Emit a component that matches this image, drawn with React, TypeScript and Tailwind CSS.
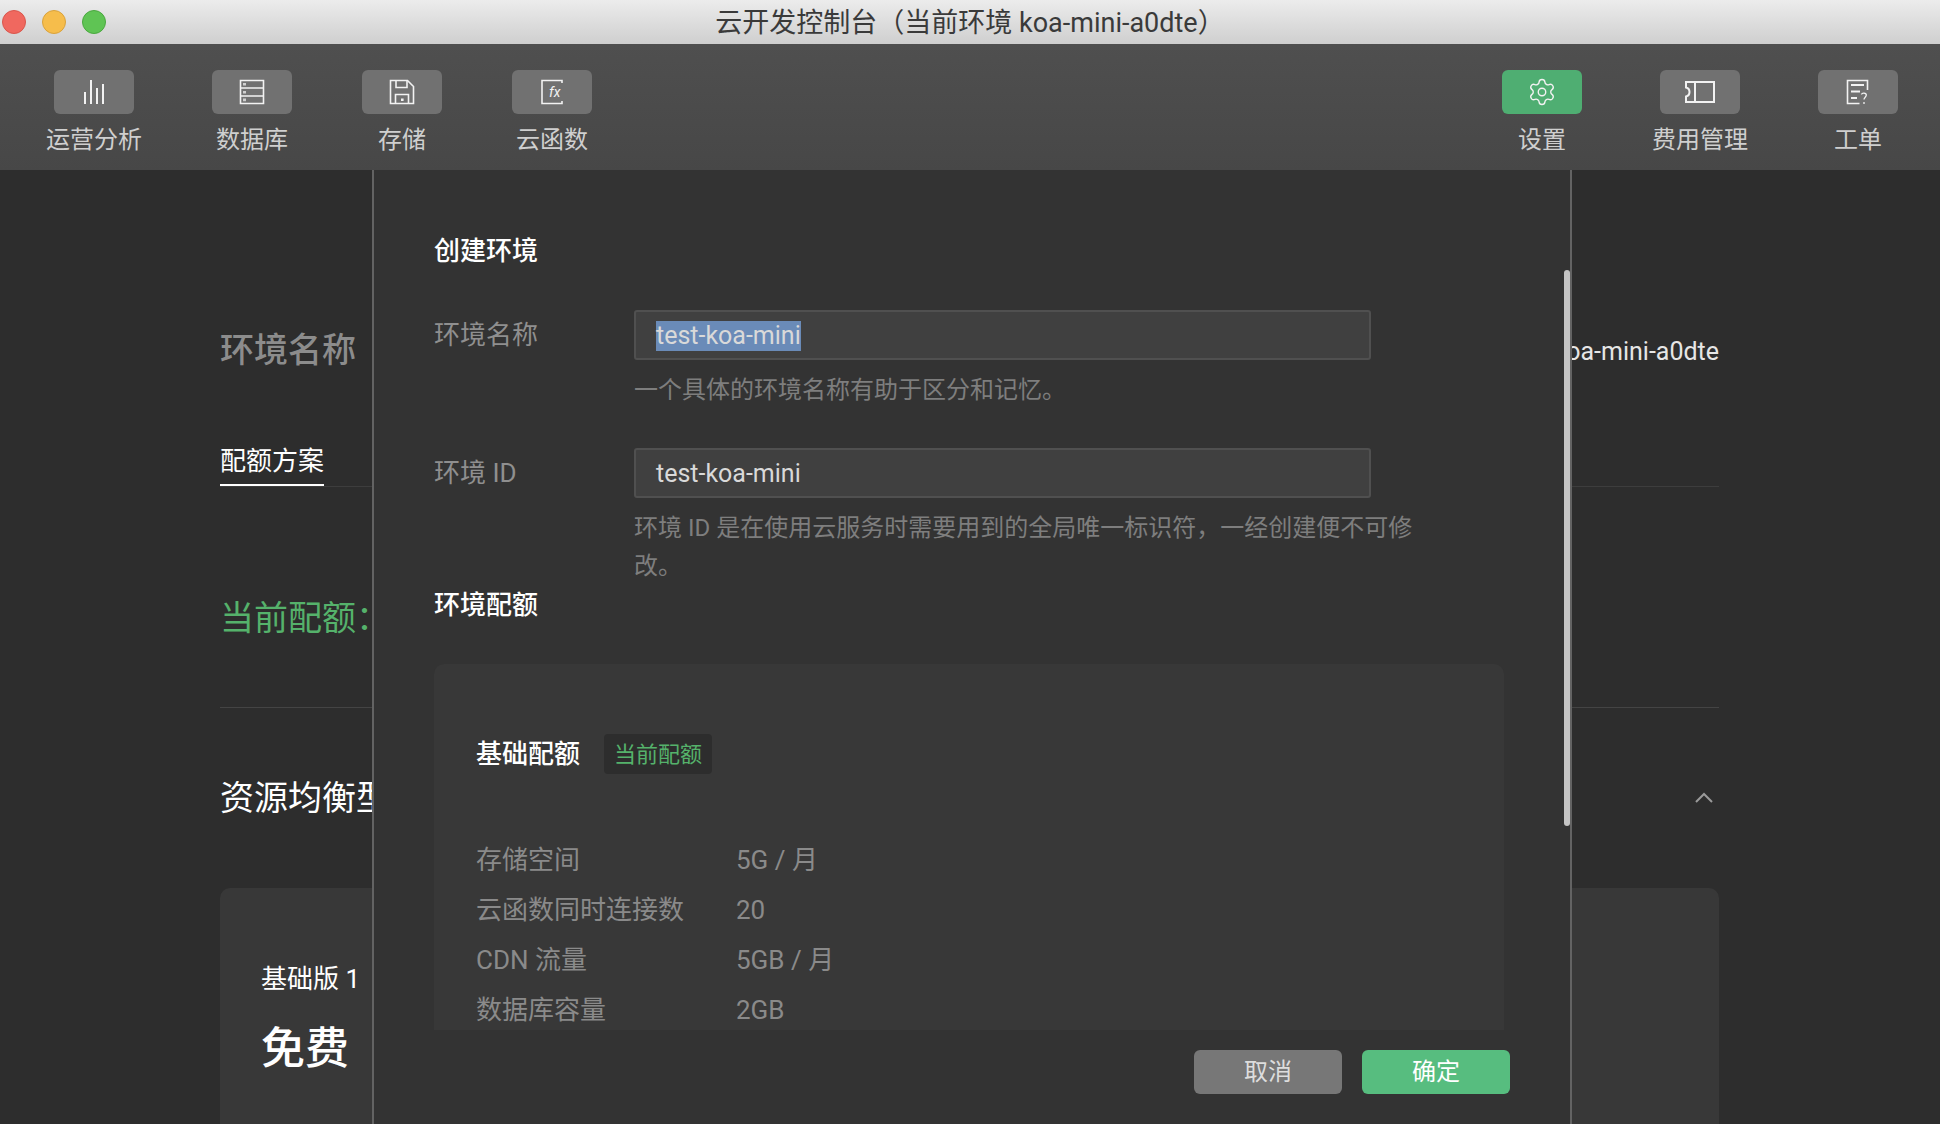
import { Settings } from "lucide-react";

const stroke = { fill: "none", stroke: "#f2f2f2", strokeWidth: 1.6 };

function IconChart() {
  return (
    <svg width="24" height="26" viewBox="0 0 24 26" {...stroke} strokeWidth={2}>
      <path d="M3 13v12M9 1v24M15 9v16M21 5v20" />
    </svg>
  );
}
function IconDb() {
  return (
    <svg width="26" height="26" viewBox="0 0 26 26" {...stroke}>
      <path d="M1.5 1.5h23v23h-23zM1.5 9h23M1.5 17h23" />
      <path d="M4 4h3v2.6H4zM4 12h3v2.6H4zM4 19.6h3v2.6H4z" fill="#cfcfcf" stroke="none" />
    </svg>
  );
}
function IconSave() {
  return (
    <svg width="26" height="26" viewBox="0 0 26 26" {...stroke}>
      <path d="M1.5 1.5h17l6 6v17h-23z" />
      <path d="M7 1.5v7h11v-7M6.5 24.5v-9h13v9" />
      <path d="M12 19.5h2.6V22H12z" fill="#f2f2f2" stroke="none" />
    </svg>
  );
}
function IconFx() {
  return (
    <svg width="24" height="26" viewBox="0 0 24 26" {...stroke}>
      <path d="M22 4V1.5H2v23h20V22" />
      <text x="9" y="18" fill="#f2f2f2" stroke="none" fontSize="14" fontStyle="italic" fontFamily="Roboto, sans-serif">fx</text>
    </svg>
  );
}
function IconTicket() {
  return (
    <svg width="30" height="22" viewBox="0 0 30 22" fill="none" stroke="#f2f2f2" strokeWidth="2">
      <path d="M1 1h28v20H1v-5.500c2.500-.5 3.500-2.500 3.500-4.500S3.500 7 1 6.500zM10 1v20" />
    </svg>
  );
}
function IconTicketQ() {
  return (
    <svg width="24" height="26" viewBox="0 0 24 26" {...stroke}>
      <path d="M21.500 11V1.500h-20v23h12" />
      <path d="M5 6h13M5 12.500h9M5 19h6" strokeWidth="2" />
      <path d="M15.500 15.500c.3-2 4.800-2 4.800.6 0 2-2.300 2.200-2.300 4.400M18 23v2" strokeWidth="1.300" />
    </svg>
  );
}

function ToolItem({ label, icon, active }: { label: string; icon: React.ReactNode; active?: boolean }) {
  return (
    <div className="flex flex-col items-center">
      <div
        className={
          active
            ? "flex h-[44px] w-[80px] items-center justify-center rounded-[6px] bg-[#4fae72]"
            : "flex h-[44px] w-[80px] items-center justify-center rounded-[6px] bg-[#717171]"
        }
      >
        {icon}
      </div>
      <div className="mt-[10px] text-[24px] leading-[32px] text-[#cfcfcf]">{label}</div>
    </div>
  );
}

function QuotaRow({ name, value }: { name: string; value: string }) {
  return (
    <div className="flex h-[50px] items-center text-[26px] text-[#8a8a8a]">
      <div className="w-[260px]">{name}</div>
      <div>{value}</div>
    </div>
  );
}

export default function App() {
  return (
    <div className="relative flex h-screen w-full flex-col overflow-hidden bg-[#2d2d2d] font-['Roboto','Noto_Sans_CJK_SC',sans-serif]">
      <header className="relative flex h-[44px] shrink-0 items-center justify-center bg-gradient-to-b from-[#ececec] to-[#cfcfcf] pt-[2px]">
        <div className="absolute left-[2px] top-[10px] flex gap-[16px]">
          <span className="h-[24px] w-[24px] rounded-full border border-[#d9564c] bg-[#f0685f]" />
          <span className="h-[24px] w-[24px] rounded-full border border-[#d9a23c] bg-[#f6bd4b]" />
          <span className="h-[24px] w-[24px] rounded-full border border-[#4aa83f] bg-[#5fc454]" />
        </div>
        <div className="text-[27px] text-[#3a3a3a]">云开发控制台（当前环境 koa-mini-a0dte）</div>
      </header>

      <nav className="flex h-[126px] shrink-0 items-start justify-between bg-gradient-to-b from-[#4f4f4f] to-[#474747] pl-[46px] pr-[42px] pt-[26px]">
        <div className="flex gap-[70px]">
          <ToolItem label="运营分析" icon={<IconChart />} />
          <ToolItem label="数据库" icon={<IconDb />} />
          <ToolItem label="存储" icon={<IconSave />} />
          <ToolItem label="云函数" icon={<IconFx />} />
        </div>
        <div className="flex gap-[70px]">
          <ToolItem label="设置" icon={<Settings size={30} strokeWidth={1.1} color="#f2f2f2" />} active />
          <ToolItem label="费用管理" icon={<IconTicket />} />
          <ToolItem label="工单" icon={<IconTicketQ />} />
        </div>
      </nav>

      <main className="flex-1 overflow-hidden pl-[220px] pr-[221px]">
        <div className="mt-[150px] flex h-[60px] items-center justify-between">
          <div className="text-[34px] font-medium text-[#8c8c8c]">环境名称</div>
          <div className="pt-[3px] text-[25px] text-[#e6e6e6]">koa-mini-a0dte</div>
        </div>
        <div className="mt-[62px] border-b border-[#3d3d3d]">
          <div className="inline-block border-b-2 border-white pb-[4px] text-[26px] leading-[38px] text-white">配额方案</div>
        </div>
        <div className="mt-[101px] text-[34px] leading-[60px] text-[#55b26b]">当前配额：</div>
        <div className="mt-[59px] border-t border-[#444]" />
        <div className="mt-[60px] flex h-[60px] items-center justify-between text-[34px] text-white">
          <span>资源均衡型</span>
          <svg width="20" height="12" viewBox="0 0 20 12" fill="none" stroke="#9a9a9a" strokeWidth="2" className="mb-[2px] mr-[5px]">
            <path d="M2 11l8-8 8 8" />
          </svg>
        </div>
        <div className="mt-[60px] h-[300px] rounded-[10px] bg-[#383838] px-[41px] pt-[71px]">
          <div className="text-[26px] leading-[40px] text-white">基础版 1</div>
          <div className="mt-[20px] text-[44px] font-medium leading-[60px] text-white">免费</div>
        </div>
      </main>

      <section className="absolute bottom-0 left-[372px] top-[170px] flex w-[1200px] flex-col border-x-2 border-[#636363] bg-[#333333]">
        <div className="relative flex-1 overflow-hidden pl-[60px] pr-[66px]">
          <h2 className="mt-[61px] text-[26px] font-medium leading-[40px] text-white">创建环境</h2>

          <div className="mt-[39px] flex">
            <label className="w-[200px] pt-[5px] text-[26px] leading-[40px] text-[#8f8f8f]">环境名称</label>
            <div>
              <div className="flex h-[50px] w-[737px] items-center rounded-[3px] border-2 border-[#505050] bg-[#404040] pl-[20px] pt-[1px] text-[25px] text-[#d9d9d9]">
                <span className="bg-[#6a8bb8] leading-[30px]">test-koa-mini</span>
              </div>
              <p className="mt-[11px] w-[790px] text-[24px] leading-[38px] text-[#7e7e7e]">一个具体的环境名称有助于区分和记忆。</p>
            </div>
          </div>

          <div className="mt-[39px] flex">
            <label className="w-[200px] pt-[5px] text-[26px] leading-[40px] text-[#8f8f8f]">环境 ID</label>
            <div>
              <div className="flex h-[50px] w-[737px] items-center rounded-[3px] border-2 border-[#505050] bg-[#404040] pl-[20px] pt-[1px] text-[25px] text-[#d9d9d9]">
                test-koa-mini
              </div>
              <p className="mt-[11px] w-[790px] text-[24px] leading-[38px] text-[#7e7e7e]">
                环境 ID 是在使用云服务时需要用到的全局唯一标识符，一经创建便不可修改。
              </p>
            </div>
          </div>

          <h2 className="mt-0 text-[26px] font-medium leading-[40px] text-white">环境配额</h2>

          <div className="mt-[39px] h-[560px] rounded-[10px] bg-[#383838] px-[42px] pt-[70px]">
            <div className="flex items-center">
              <span className="text-[26px] font-medium text-white">基础配额</span>
              <span className="ml-[24px] flex h-[40px] w-[108px] items-center justify-center rounded-[4px] bg-[#2d2d2d] text-[22px] text-[#55b26b]">当前配额</span>
            </div>
            <div className="mt-[61px]">
              <QuotaRow name="存储空间" value="5G / 月" />
              <QuotaRow name="云函数同时连接数" value="20" />
              <QuotaRow name="CDN 流量" value="5GB / 月" />
              <QuotaRow name="数据库容量" value="2GB" />
            </div>
          </div>
        </div>
        <div className="flex h-[94px] shrink-0 items-start justify-end gap-[20px] pr-[60px] pt-[20px]">
          <button className="h-[44px] w-[148px] rounded-[6px] bg-[#777777] text-[24px] text-[#dddddd]">取消</button>
          <button className="h-[44px] w-[148px] rounded-[6px] bg-[#57bd7f] text-[24px] text-white">确定</button>
        </div>
        <div className="absolute right-0 top-[100px] h-[556px] w-[6px] rounded-[3px] bg-[#c4c4c4]" />
      </section>
    </div>
  );
}
